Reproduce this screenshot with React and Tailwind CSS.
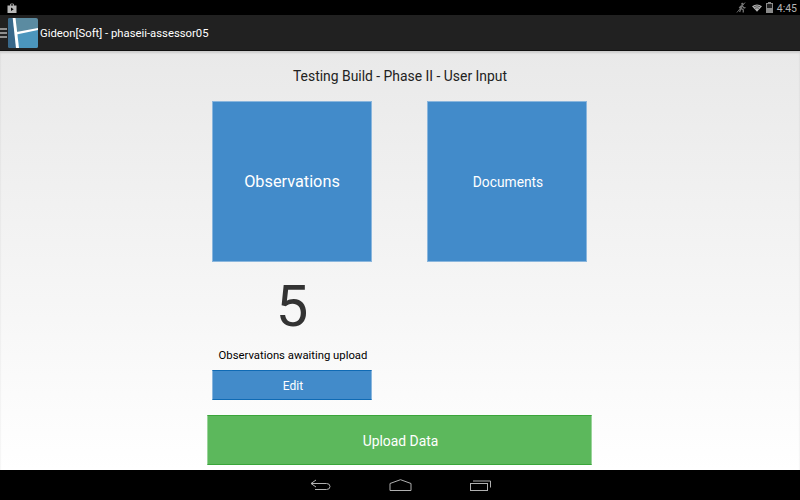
const roboto = { fontFamily: "Roboto, sans-serif" };

function Logo() {
  return (
    <svg width="30" height="30" viewBox="0 0 30 30" className="shrink-0">
      <defs>
        <clipPath id="logoClip">
          <rect width="30" height="30" rx="2" />
        </clipPath>
      </defs>
      <g clipPath="url(#logoClip)">
        <rect width="30" height="30" fill="#5b8ba1" />
        <path d="M9 15 L30 11 V30 H10 Z" fill="#4b96bd" />
        <path d="M0 0 H5 L8 30 H0 Z" fill="#38688a" />
        <path d="M4.7 0 L7.5 0 L11 30 L8 30 Z" fill="#ffffff" />
        <path d="M8.5 14 L30 10 L30 12 L8.5 16.5 Z" fill="#ffffff" />
      </g>
    </svg>
  );
}

export default function App() {
  return (
    <div className="w-[800px] h-[500px] flex flex-col overflow-hidden bg-black" style={roboto}>
      <div className="h-[15px] bg-black flex items-center justify-between pl-[7px] pr-[3px] shrink-0">
        <svg width="10" height="10" viewBox="0 0 9 10">
          <path d="M0 2.5 H2.5 V1.5 Q2.5 0.5 4.5 0.5 Q6.5 0.5 6.5 1.5 V2.5 H9 V10 H0 Z M3.3 2.5 H5.7 V1.6 Q5.7 1.2 4.5 1.2 Q3.3 1.2 3.3 1.6 Z" fill="#b8b8b8" fillRule="evenodd" />
          <path d="M3.5 4.5 L6.2 6.2 L3.5 8 Z" fill="#000" />
        </svg>
        <div className="flex items-center">
          <svg width="10" height="11" viewBox="0 0 11 12" className="mr-[6px] opacity-70">
            <circle cx="7" cy="2" r="1.3" fill="#a8a8a8" />
            <path d="M6.5 3.5 L4 11 M6.5 4 L9 6.5 L10.5 6 M5.5 7 L8 8.5 L8 11.5 M6 4 L3.5 6.5" stroke="#a8a8a8" strokeWidth="1.4" fill="none" />
            <path d="M1 11.5 L10 0.5" stroke="#a8a8a8" strokeWidth="1" />
          </svg>
          <svg width="10" height="8" viewBox="0 0 13 10" className="mr-[4px]">
            <path d="M0 2.6 Q6.5 -1.8 13 2.6 L6.5 10 Z" fill="#b5b5b5" />
            <path d="M2.4 3.4 Q6.5 0.9 10.6 3.4 M4 5.4 Q6.5 4 9 5.4" stroke="#000" strokeWidth="0.7" fill="none" />
          </svg>
          <svg width="7" height="11" viewBox="0 0 7 11" className="mr-[4px]">
            <path d="M2 0 H5 V1 H7 V11 H0 V1 H2 Z" fill="#8a8a8a" />
            <rect x="1" y="2" width="5" height="4" fill="#222" />
          </svg>
          <span className="text-[#b4b4b4] text-[10.5px] leading-none pt-[3px]">4:45</span>
        </div>
      </div>

      <div className="h-[36px] bg-[#212121] border-b border-[#111] flex items-center shrink-0">
        <div className="w-[7px] h-[10px] flex flex-col justify-between mr-[1px]">
          <div className="h-[2px] bg-[#8f8f8f]" />
          <div className="h-[2px] bg-[#8f8f8f]" />
          <div className="h-[2px] bg-[#8f8f8f]" />
        </div>
        <Logo />
        <span className="text-white text-[11.3px] ml-[2px] pt-[3px] whitespace-nowrap">Gideon[Soft] - phaseii-assessor05</span>
      </div>

      <div className="flex-1 flex flex-col items-center pr-[1px] bg-gradient-to-b from-[#e9e9e9] to-white shadow-[inset_0_2px_2px_rgba(0,0,0,0.12)]">
        <div className="h-[50px] flex items-center text-[13.9px] text-[#222] pt-[1px] pl-[1px]">Testing Build - Phase II - User Input</div>
        <div className="flex gap-[55px]">
          <div className="w-[160px] flex flex-col items-center">
            <div className="w-[160px] h-[161px] bg-[#428bca] border border-[#8ab6dd] flex items-center justify-center text-white text-[16.3px] pt-[2px]">Observations</div>
            <div className="text-[58px] leading-[70px] h-[70px] mt-[9px] text-[#333]">5</div>
            <div className="text-[11.3px] leading-[14px] mt-[8px] mb-[-1px] pl-[2px] text-black whitespace-nowrap">Observations awaiting upload</div>
            <div className="w-[160px] h-[30px] mt-[8px] bg-[#428bca] border-y border-y-[#0f6ab4] border-x border-x-[#8ab6dd] flex items-center justify-center text-white text-[12px] pt-[1px] pl-[2px]">Edit</div>
          </div>
          <div className="w-[160px] h-[161px] bg-[#428bca] border border-[#8ab6dd] flex items-center justify-center text-white text-[13.8px] pt-[2px] pl-[2px]">Documents</div>
        </div>
        <div className="w-[385px] h-[50px] mt-[15px] bg-[#5cb85c] border-y border-y-[#3aa53a] border-x border-x-[#9ad49a] flex items-center justify-center text-white text-[13.9px] pt-[3px] pl-[2px]">Upload Data</div>
      </div>

      <div className="h-[30px] bg-black flex items-center justify-center shrink-0">
        <div className="flex items-center gap-[58px]">
          <svg width="22" height="12" viewBox="0 0 22 12">
            <path d="M7 1 L2 4.5 L7 8 M2 4.5 H17.5 Q21 4.5 21 7.5 Q21 10.5 17.5 10.5 H6" stroke="#b0b0b0" strokeWidth="1" fill="none" />
          </svg>
          <svg width="23" height="12" viewBox="0 0 23 12">
            <path d="M1 4.5 L11.5 0.7 L22 4.5 V11.5 H1 Z" stroke="#b0b0b0" strokeWidth="1" fill="none" />
          </svg>
          <svg width="22" height="12" viewBox="0 0 22 12">
            <rect x="0.5" y="4.5" width="17" height="7" stroke="#b0b0b0" strokeWidth="1" fill="none" />
            <path d="M3 2 H20.5 V8.5" stroke="#b0b0b0" strokeWidth="1" fill="none" />
          </svg>
        </div>
      </div>
    </div>
  );
}
